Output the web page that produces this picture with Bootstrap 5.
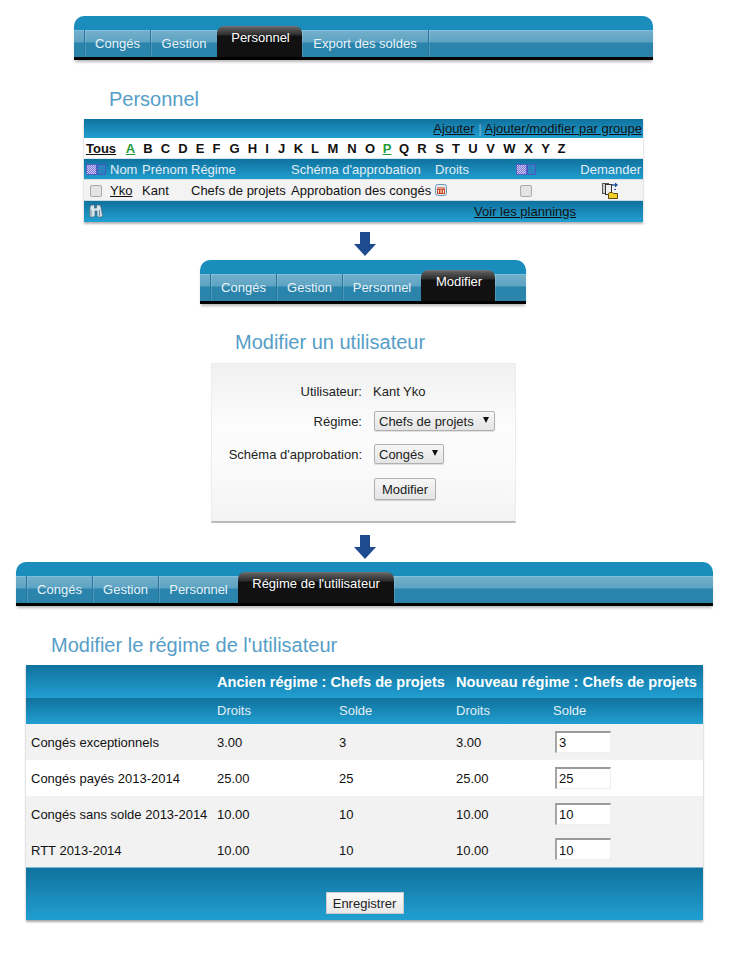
<!DOCTYPE html>
<html lang="fr">
<head>
<meta charset="utf-8">
<title>Personnel</title>
<link href="https://cdn.jsdelivr.net/npm/bootstrap@5.3.0/dist/css/bootstrap.min.css" rel="stylesheet">
<style>
html,body{background:#fff;margin:0}
body{font-family:"Liberation Sans",Arial,sans-serif;font-size:13px;color:#222;line-height:15px;height:956px;overflow:hidden}
a{color:#111}
.menu-wrap{position:relative;height:44px;border-radius:10px 10px 0 0;background:#1a8dbd;padding-top:14px;box-shadow:0 3px 3px -1px rgba(0,0,0,.28)}
.menu-strip{height:26px;border-top:1px solid #7cc0dc;background:linear-gradient(#73afca 0,#5da3c3 11px,#2b84ab 12px,#2b84ab 100%);box-sizing:content-box}
.menu-end{height:3px;background:#000}
.tab-cell{height:27px;margin-top:-1px;padding:6px 0 0;border-left:1px solid #2876a0;box-shadow:inset 1px 0 0 rgba(255,255,255,.15);color:#eaf3f8;text-align:center;font-size:13px;line-height:15px}
.tab-cell.first{border-left:0;box-shadow:none}
.tab-cell.active{position:relative;margin-top:-5px;height:31px;padding:4px 0 0 2px;border:0;box-shadow:none;border-radius:7px 7px 0 0;background:linear-gradient(#777 0,#5a5a5a 2px,#2c2c2c 9px,#111 10px,#111 100%);color:#fff;font-size:13px}
.tab-cell.active.flush{padding-left:0}
.tab-cell.active+.tab-cell{border-left:0}
.page-title{font-size:20px;line-height:24px;color:#559ec8;font-weight:400;margin:0}
.blue-bar{background:linear-gradient(#10729e,#219fd1);color:#e2eff6}
.arrow-line{height:24px}
.people{width:559px;margin-left:84px;border-collapse:collapse;box-shadow:0 2px 2px rgba(0,0,0,.3)}
.people td{padding:0;white-space:nowrap}
.people .r1 td{height:19px;text-align:right;padding-right:1px;color:#111;vertical-align:middle}
.people .r1 a{color:#111}
.alpha-box{display:flex;align-items:center;height:20px;padding-left:2px}
.alpha-box span,.alpha-box a{display:block;color:#111;font-weight:700;text-decoration:none}
.alpha-box a{text-decoration:underline}
.alpha-box .tous{width:34px}
.alpha-box a.green{color:#1f9d3c}
.alpha-box span,.alpha-box a.green{text-align:center}
.people .r3 td{height:21px;border-top:1px solid #d9e6ee;vertical-align:middle}
.people .r4 td{height:21px;background:#f3f3f3;border-top:1px solid #dcdcdc;vertical-align:middle;border-bottom:1px solid #c9d9e2;color:#111}
.people .r5 td{height:21px;vertical-align:middle}
.fake-check{display:inline-block;width:12px;height:12px;border:1px solid #a9a9a9;border-radius:2px;background:#e4e4e4;vertical-align:middle}
.form-panel{width:305px;height:160px;margin-left:211px;border:1px solid #ececec;border-bottom:2px solid #b9b9b9;background:linear-gradient(#f0f0f0,#fcfcfc 40%,#fafafa 70%,#f3f3f3);padding-top:20px}
.form-line{display:flex;align-items:center}
.field-name{width:150px;text-align:right;margin-right:11px;color:#222}
.field-name.lower{padding-top:2px}
.fake-select{appearance:none;-webkit-appearance:none;display:block;height:20px;padding:1px 0 0 4px;font:13px "Liberation Sans",Arial,sans-serif;color:#222;border:1px solid #b0b0b0;border-radius:2px;box-shadow:0 1px 1px rgba(0,0,0,.12);background:linear-gradient(#f6f6f6,#e4e4e4)}
.select-box{position:relative;margin-left:1px}
.select-box::after{content:"";position:absolute;right:6px;top:6px;border-left:3.5px solid transparent;border-right:3.5px solid transparent;border-top:6px solid #111}
.soft-btn{display:block;font:13px "Liberation Sans",Arial,sans-serif;color:#222;height:22px;padding:1px 0 0;border:1px solid #b0b0b0;border-radius:2px;background:linear-gradient(#f6f6f6,#e4e4e4);box-shadow:0 1px 1px rgba(0,0,0,.15)}
.regime{width:677px;margin-left:26px;border-collapse:collapse;table-layout:fixed;box-shadow:0 2px 2px rgba(0,0,0,.35)}
.regime td,.regime th{padding:0 0 0 5px;white-space:nowrap;vertical-align:middle;font-weight:400}
.regime .head-top th{height:33px;color:#fff;font-size:14.6px;font-weight:700;padding-top:2px}
.regime .head-sub th{height:26px;color:#e2eff6}
.regime tbody tr{height:36px}
.regime tbody td{background:#f2f2f2;color:#111;padding-top:2px}
.regime tbody td:last-child{padding-top:0}
.regime tbody tr:nth-child(2) td{background:#fff}
.regime .foot td{height:52px;text-align:center;vertical-align:top;padding:24px 0 0;border-top:1px solid #7fb6d2}
.amount{display:block;width:56px;height:22px;margin-left:2px;padding:1px 0 0 2px;font:13px "Liberation Sans",Arial,sans-serif;color:#111;background:#fff;border:1px solid #eee;border-top:2px solid #9a9a9a;border-left:2px solid #a5a5a5;border-radius:0}
.save-btn{display:inline-block;font:13px "Liberation Sans",Arial,sans-serif;color:#222;width:78px;height:22px;padding:0;border:1px solid #ccc;background:linear-gradient(#fafafa,#e8e8e8)}
.block-one{width:579px;margin-left:74px}
.block-two{width:326px;margin-left:200px}
.block-three{width:697px;margin-left:16px}
</style>
</head>
<body>
<svg width="0" height="0" class="d-block" aria-hidden="true">
  <defs>
    <pattern id="dots" width="2" height="2" patternUnits="userSpaceOnUse"><rect width="2" height="2" fill="#7d76d6"/><rect width="1" height="1" fill="#c9c7ef"/><rect x="1" y="1" width="1" height="1" fill="#c9c7ef"/></pattern>
  </defs>
</svg>
<div class="pt-3">
  <div class="block-one">
    <div class="menu-wrap">
      <div class="menu-strip d-flex">
        <div class="tab-cell first" style="width:10px"></div>
        <div class="tab-cell" style="width:66px">Congés</div>
        <div class="tab-cell" style="width:67px">Gestion</div>
        <div class="tab-cell active" style="width:85px">Personnel</div>
        <div class="tab-cell" style="width:126px">Export des soldes</div>
        <div class="tab-cell flex-grow-1"></div>
      </div>
      <div class="menu-end"></div>
    </div>
  </div>
</div>
<h2 class="page-title" style="margin:27px 0 8px 109px">Personnel</h2>

<table class="people">
  <tr class="r1 blue-bar"><td colspan="8"><a href="#">Ajouter</a> <span style="color:#7fb6d2">|</span> <a href="#">Ajouter/modifier par groupe</a></td></tr>
  <tr><td colspan="8" style="background:#fff">
    <div class="alpha-box">
      <a href="#" class="tous">Tous</a>
      <a href="#" class="green" style="width:17px;margin-left:2px">A</a>
      <span style="width:18px">B</span><span style="width:17px">C</span><span style="width:18px">D</span><span style="width:16px">E</span><span style="width:17px">F</span><span style="width:19px">G</span><span style="width:17px">H</span><span style="width:12px">I</span><span style="width:17px">J</span><span style="width:17px">K</span><span style="width:16px">L</span><span style="width:20px">M</span><span style="width:18px">N</span><span style="width:18px">O</span>
      <a href="#" class="green" style="width:16px">P</a>
      <span style="width:18px">Q</span><span style="width:18px">R</span><span style="width:17px">S</span><span style="width:16px">T</span><span style="width:18px">U</span><span style="width:17px">V</span><span style="width:21px">W</span><span style="width:17px">X</span><span style="width:17px">Y</span><span style="width:15px">Z</span>
    </div>
  </td></tr>
  <tr class="r3 blue-bar">
    <td style="width:26px;padding-left:2px"><svg width="20" height="11" viewBox="0 0 20 11" class="d-block"><rect x=".5" y=".5" width="10" height="10" fill="url(#dots)" stroke="#5147c4" stroke-dasharray="2 1"/><rect x="11.500" y=".5" width="8" height="10" fill="#2a84bd" stroke="#5147c4" stroke-dasharray="2 1"/></svg></td>
    <td style="width:32px">Nom</td>
    <td style="width:49px">Prénom</td>
    <td style="width:100px">Régime</td>
    <td style="width:144px">Schéma d'approbation</td>
    <td style="width:81px">Droits</td>
    <td style="width:60px"><svg width="20" height="11" viewBox="0 0 20 11" class="d-block"><rect x=".5" y=".5" width="10" height="10" fill="url(#dots)" stroke="#5147c4" stroke-dasharray="2 1"/><rect x="11.500" y=".5" width="8" height="10" fill="#2a84bd" stroke="#5147c4" stroke-dasharray="2 1"/></svg></td>
    <td class="text-end" style="padding-right:2px">Demander</td>
  </tr>
  <tr class="r4">
    <td style="padding-left:6px"><span class="fake-check"></span></td>
    <td><a href="#">Yko</a></td>
    <td>Kant</td>
    <td>Chefs de projets</td>
    <td>Approbation des congés</td>
    <td><svg width="12" height="12" viewBox="0 0 12 12" class="d-block"><rect x=".5" y=".5" width="11" height="11" rx="2" fill="#dfe9f0" stroke="#6f9ab5"/><rect x="2" y="3" width="8" height="7" fill="#c8451d"/><path d="M2 4h8" stroke="#e9e9e9"/><path d="M3.500 9V6M6 9V5.500M8.500 9V6" stroke="#fff"/></svg></td>
    <td style="padding-left:4px"><span class="fake-check"></span></td>
    <td><svg width="17" height="17" viewBox="0 0 17 17" class="d-block" style="margin-left:26px"><rect x=".5" y="1.500" width="6" height="10" fill="#cfcfcf" stroke="#555"/><rect x="3.500" y="2.500" width="6" height="10" fill="#efefef" stroke="#333"/><path d="M6.500 16.500v-5l1-1h3l1 1h4v5z" fill="#f0d028" stroke="#5b4c0c"/><path d="M10 3h4" stroke="#1d4f9c" stroke-width="1.400"/><path d="M13 .5l3 2.500-3 2.500z" fill="#1d4f9c"/><path d="M14 7.500h-2" stroke="#1d4f9c"/></svg></td>
  </tr>
  <tr class="r5 blue-bar">
    <td style="padding-left:5px"><svg width="14" height="14" viewBox="0 0 14 14" class="d-block"><path d="M2 1h3.500v3h2V1H11l1 2 1.500 8.500-1 1.500H9l-1-1V7H6v5l-1 1H1.500l-1-1.500L1 3z" fill="#d6e4ec" stroke="#4f6c7c" stroke-width=".8"/><path d="M2 6v6M10.500 6v6" stroke="#6f8b9a"/></svg></td>
    <td colspan="6" class="text-end" style="padding-right:0"><a href="#">Voir les plannings</a></td>
    <td></td>
  </tr>
</table>

<div class="arrow-line d-flex justify-content-center" style="margin-top:10px">
  <svg width="24" height="24" viewBox="0 0 24 24" class="d-block"><path d="M7 0h10v12h6L12 24 1 12h6z" fill="#1f4a90"/></svg>
</div>

<div style="margin-top:4px">
  <div class="block-two">
    <div class="menu-wrap">
      <div class="menu-strip d-flex">
        <div class="tab-cell first" style="width:10px"></div>
        <div class="tab-cell" style="width:66px">Congés</div>
        <div class="tab-cell" style="width:66px">Gestion</div>
        <div class="tab-cell" style="width:79px">Personnel</div>
        <div class="tab-cell active" style="width:74px">Modifier</div>
        <div class="tab-cell flex-grow-1"></div>
      </div>
      <div class="menu-end"></div>
    </div>
  </div>
</div>
<h2 class="page-title" style="margin:26px 0 9px 235px">Modifier un utilisateur</h2>

<div class="form-panel">
  <div class="form-line" style="height:15px"><div class="field-name">Utilisateur:</div><div>Kant Yko</div></div>
  <div class="form-line" style="margin-top:12px"><div class="field-name lower">Régime:</div><div class="select-box"><select class="fake-select" style="width:121px"><option>Chefs de projets</option></select></div></div>
  <div class="form-line" style="margin-top:13px"><div class="field-name lower">Schéma d'approbation:</div><div class="select-box"><select class="fake-select" style="width:70px"><option>Congés</option></select></div></div>
  <div class="form-line" style="margin-top:14px"><div class="field-name"></div><button type="button" class="soft-btn" style="width:62px;margin-left:1px">Modifier</button></div>
</div>

<div class="arrow-line d-flex justify-content-center" style="margin-top:12px">
  <svg width="24" height="24" viewBox="0 0 24 24" class="d-block"><path d="M7 0h10v12h6L12 24 1 12h6z" fill="#1f4a90"/></svg>
</div>

<div style="margin-top:3px">
  <div class="block-three">
    <div class="menu-wrap">
      <div class="menu-strip d-flex">
        <div class="tab-cell first" style="width:10px"></div>
        <div class="tab-cell" style="width:66px">Congés</div>
        <div class="tab-cell" style="width:66px">Gestion</div>
        <div class="tab-cell" style="width:80px">Personnel</div>
        <div class="tab-cell active flush" style="width:156px">Régime de l'utilisateur</div>
        <div class="tab-cell flex-grow-1"></div>
      </div>
      <div class="menu-end"></div>
    </div>
  </div>
</div>
<h2 class="page-title" style="margin:27px 0 8px 51px">Modifier le régime de l'utilisateur</h2>

<table class="regime">
  <colgroup><col style="width:186px"><col style="width:122px"><col style="width:117px"><col style="width:97px"><col style="width:155px"></colgroup>
  <thead>
    <tr class="head-top blue-bar"><th></th><th colspan="2">Ancien régime : Chefs de projets</th><th colspan="2">Nouveau régime : Chefs de projets</th></tr>
    <tr class="head-sub blue-bar"><th></th><th>Droits</th><th>Solde</th><th>Droits</th><th>Solde</th></tr>
  </thead>
  <tbody>
    <tr><td>Congés exceptionnels</td><td>3.00</td><td>3</td><td>3.00</td><td><input class="amount" value="3"></td></tr>
    <tr><td>Congés payés 2013-2014</td><td>25.00</td><td>25</td><td>25.00</td><td><input class="amount" value="25"></td></tr>
    <tr><td>Congés sans solde 2013-2014</td><td>10.00</td><td>10</td><td>10.00</td><td><input class="amount" value="10"></td></tr>
    <tr><td>RTT 2013-2014</td><td>10.00</td><td>10</td><td>10.00</td><td><input class="amount" value="10"></td></tr>
  </tbody>
  <tfoot><tr class="foot blue-bar"><td colspan="5"><button type="button" class="save-btn">Enregistrer</button></td></tr></tfoot>
</table>
<script src="https://cdn.jsdelivr.net/npm/bootstrap@5.3.0/dist/js/bootstrap.bundle.min.js"></script>
</body>
</html>
